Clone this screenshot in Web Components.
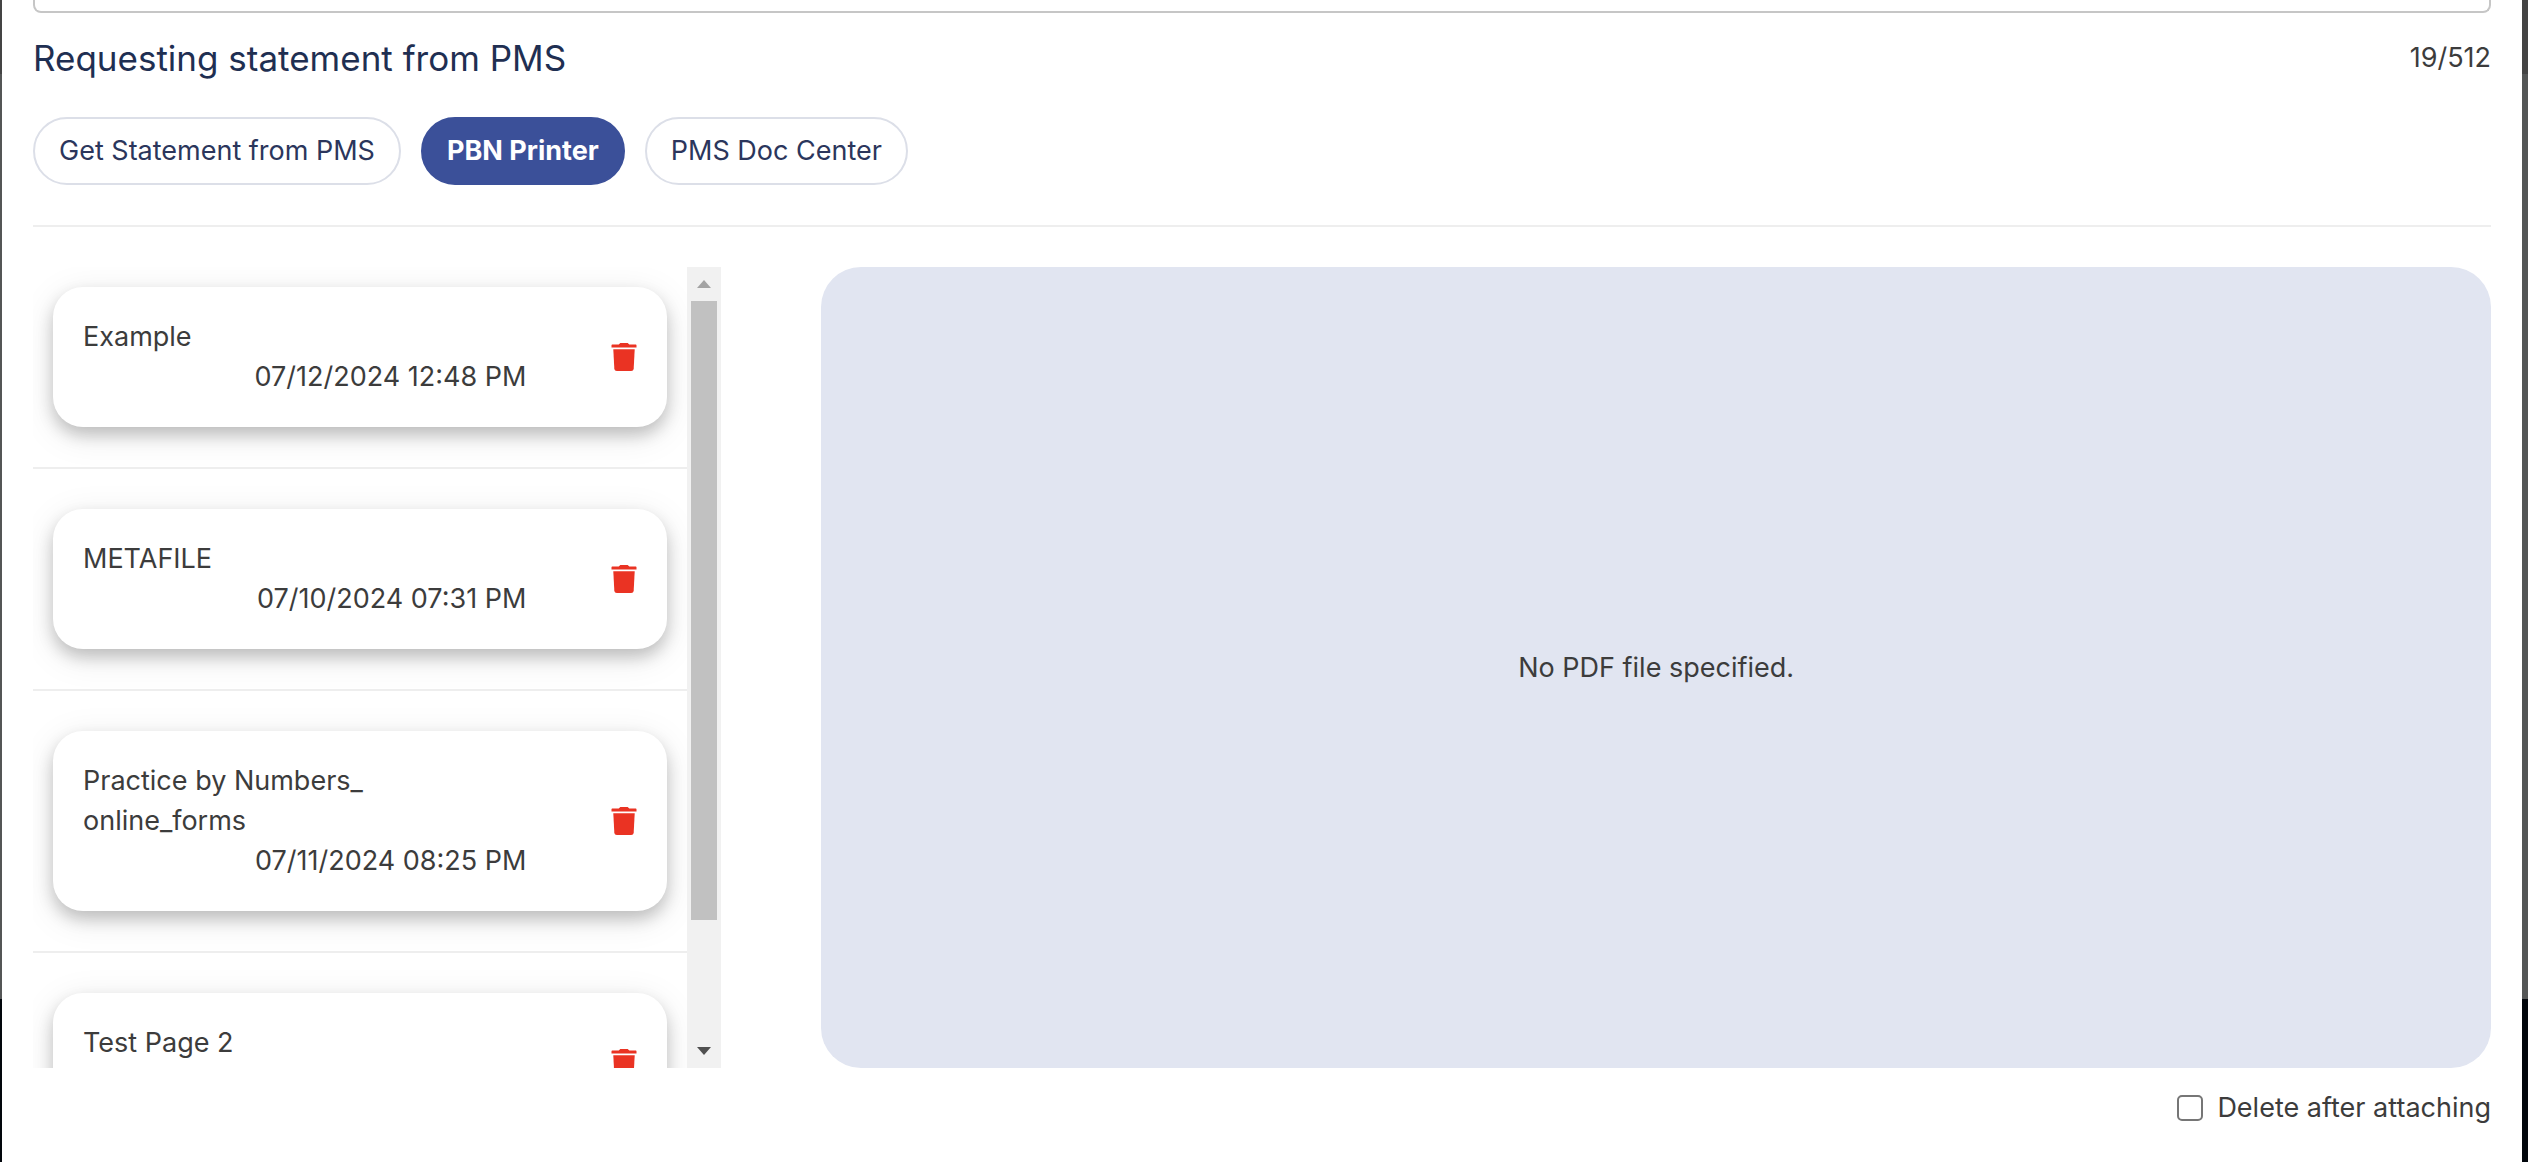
<!DOCTYPE html>
<html lang="en">
<head>
<meta charset="utf-8">
<title>Attach statement</title>
<style>
    html, body {
        margin: 0;
        height: 100%;
    }
    body {
        font-family: Inter, "Open Sans", sans-serif;
        font-size: 27px;
        line-height: 40px;
        color: #3c3c3c;
        background: linear-gradient(#444 74px, #545656 74px 86%, #02060c 86%);
    }
</style>
</head>
<body>
<statement-dialog>
    <char-counter slot="counter" value="19" max="512"></char-counter>

    <tab-chip slot="tabs">Get Statement from PMS</tab-chip>
    <tab-chip slot="tabs" active>PBN Printer</tab-chip>
    <tab-chip slot="tabs">PMS Doc Center</tab-chip>

    <scroll-list slot="files">
        <file-card date="07/12/2024 12:48 PM">Example</file-card>
        <file-card date="07/10/2024 07:31 PM">METAFILE</file-card>
        <file-card date="07/11/2024 08:25 PM">Practice by Numbers_<wbr>online_forms</file-card>
        <file-card date="07/12/2024 12:51 PM">Test Page 2</file-card>
    </scroll-list>

    <pdf-preview slot="preview">No PDF file specified.</pdf-preview>
    <check-option slot="footer">Delete after attaching</check-option>
</statement-dialog>

<script>
class StatementDialog extends HTMLElement {
    constructor() {
        super();
        this.attachShadow({ mode: 'open' }).innerHTML = `
            <style>
                :host {
                    display: flex;
                    flex-direction: column;
                    box-sizing: border-box;
                    height: 100vh;
                    margin: 0 6px 0 2px;
                    padding: 0 31px 34px;
                    background: #fff;
                }
                textarea {
                    display: block;
                    box-sizing: border-box;
                    width: 100%;
                    height: 13px;
                    padding: 0;
                    border: 2px solid #c6c6c6;
                    border-top: 0;
                    border-radius: 0 0 8px 8px;
                    resize: none;
                    overflow: hidden;
                }
                header {
                    display: flex;
                    justify-content: space-between;
                    align-items: center;
                    margin: 25px 0 39px;
                }
                h2 {
                    margin: 0;
                    font-size: 35px;
                    font-weight: 400;
                    line-height: 40px;
                    color: #1f2f52;
                }
                nav {
                    display: flex;
                    gap: 20px;
                }
                hr {
                    width: 100%;
                    margin: 40px 0;
                    border: 0;
                    border-top: 2px solid #eee;
                }
                main {
                    display: flex;
                    flex: 1;
                    gap: 100px;
                    min-height: 0;
                }
                slot[name="files"]::slotted(*) {
                    flex: 0 0 28%;
                }
                slot[name="preview"]::slotted(*) {
                    flex: 1;
                }
                footer {
                    display: flex;
                    justify-content: flex-end;
                    margin-top: 20px;
                }
            </style>
            <textarea aria-label="Message"></textarea>
            <header>
                <h2>Requesting statement from PMS</h2>
                <slot name="counter"></slot>
            </header>
            <nav><slot name="tabs"></slot></nav>
            <hr>
            <main>
                <slot name="files"></slot>
                <slot name="preview"></slot>
            </main>
            <footer><slot name="footer"></slot></footer>
        `;
    }
}

class CharCounter extends HTMLElement {
    constructor() {
        super();
        this.attachShadow({ mode: 'open' }).innerHTML = `
            <style>
                :host { display: block; }
            </style>
            <span>${this.getAttribute('value')}/${this.getAttribute('max')}</span>
        `;
    }
}

class TabChip extends HTMLElement {
    constructor() {
        super();
        this.attachShadow({ mode: 'open' }).innerHTML = `
            <style>
                :host { display: block; }
                button {
                    padding: 12px 24px;
                    border: 2px solid #dcdfe8;
                    border-radius: 34px;
                    background: #fff;
                    color: #2b365c;
                    font: inherit;
                    white-space: nowrap;
                    cursor: pointer;
                }
                :host([active]) button {
                    border-color: #3b5099;
                    background: #3b5099;
                    color: #fff;
                    font-weight: 700;
                }
            </style>
            <button type="button"><slot></slot></button>
        `;
    }
}

class ScrollList extends HTMLElement {
    constructor() {
        super();
        this.attachShadow({ mode: 'open' }).innerHTML = `
            <style>
                :host {
                    display: flex;
                    min-height: 0;
                }
                .items {
                    flex: 1;
                    box-sizing: border-box;
                    padding-top: 20px;
                    overflow-y: auto;
                    scrollbar-width: none;
                }
                .bar {
                    display: flex;
                    flex-direction: column;
                    width: 34px;
                    background: #f1f1f1;
                }
                button {
                    display: flex;
                    justify-content: center;
                    align-items: center;
                    height: 34px;
                    padding: 0;
                    border: 0;
                    background: none;
                    color: #505050;
                }
                button:disabled {
                    color: #a3a3a3;
                }
                .track {
                    flex: 1;
                    padding: 0 4px;
                }
                .thumb {
                    background: #c1c1c1;
                }
            </style>
            <div class="items"><slot></slot></div>
            <div class="bar">
                <button type="button" class="up" aria-label="Scroll up" disabled>
                    <svg width="14" height="8" viewBox="0 0 14 8"><path fill="currentColor" d="M0 8L7 0l7 8z"/></svg>
                </button>
                <div class="track"><div class="thumb"></div></div>
                <button type="button" class="down" aria-label="Scroll down">
                    <svg width="14" height="8" viewBox="0 0 14 8"><path fill="currentColor" d="M0 0h14L7 8z"/></svg>
                </button>
            </div>
        `;
    }

    connectedCallback() {
        const root = this.shadowRoot;
        const items = root.querySelector('.items');
        root.querySelector('.up').addEventListener('click', () => items.scrollBy(0, -80));
        root.querySelector('.down').addEventListener('click', () => items.scrollBy(0, 80));
        items.addEventListener('scroll', () => this.update());
        new ResizeObserver(() => this.update()).observe(items);
    }

    update() {
        const root = this.shadowRoot;
        const items = root.querySelector('.items');
        const track = root.querySelector('.track').clientHeight;
        const thumb = root.querySelector('.thumb');
        const end = items.scrollHeight - items.clientHeight;
        thumb.style.height = Math.round(track * items.clientHeight / items.scrollHeight) + 'px';
        thumb.style.marginTop = Math.round(track * items.scrollTop / items.scrollHeight) + 'px';
        root.querySelector('.up').disabled = items.scrollTop <= 0;
        root.querySelector('.down').disabled = items.scrollTop >= end;
    }
}

class FileCard extends HTMLElement {
    constructor() {
        super();
        this.attachShadow({ mode: 'open' }).innerHTML = `
            <style>
                :host { display: flow-root; }
                .card {
                    display: grid;
                    grid-template-columns: 4fr 1fr;
                    align-items: center;
                    margin: 0 20px;
                    padding: 30px;
                    border-radius: 30px;
                    background: #fff;
                    box-shadow: 0 8px 16px rgba(0,0,0,0.2), 0 8px 36px rgba(0,0,0,0.1);
                }
                .name {
                    max-width: 80%;
                }
                .date {
                    text-align: right;
                }
                button {
                    justify-self: end;
                    display: flex;
                    padding: 0;
                    border: 0;
                    background: none;
                    color: #ea3323;
                    cursor: pointer;
                }
                hr {
                    margin: 40px 0;
                    border: 0;
                    border-top: 2px solid #eee;
                }
            </style>
            <div class="card">
                <div>
                    <div class="name"><slot></slot></div>
                    <div class="date">${this.getAttribute('date')}</div>
                </div>
                <button type="button" aria-label="Delete file">
                    <svg width="26" height="30" viewBox="0 0 26 30" fill="currentColor">
                        <path d="M1.5 2.4h6.200L9.300 1h7.400l1.600 1.400h6.200c.6 0 1 .4 1 1v2.100H.5V3.400c0-.6.4-1 1-1z"/>
                        <path d="M2.300 7.300h21.400l-1 19.200c-.1 1.700-1.200 2.500-2.600 2.500H5.900c-1.400 0-2.500-.8-2.600-2.500z"/>
                    </svg>
                </button>
            </div>
            <hr>
        `;
    }
}

class PdfPreview extends HTMLElement {
    constructor() {
        super();
        this.attachShadow({ mode: 'open' }).innerHTML = `
            <style>
                :host {
                    display: flex;
                    justify-content: center;
                    align-items: center;
                    border-radius: 40px;
                    background: #e1e5f1;
                }
            </style>
            <slot></slot>
        `;
    }
}

class CheckOption extends HTMLElement {
    constructor() {
        super();
        this.attachShadow({ mode: 'open' }).innerHTML = `
            <style>
                :host { display: block; }
                label {
                    display: flex;
                    align-items: center;
                    gap: 14px;
                }
                input {
                    appearance: none;
                    box-sizing: border-box;
                    width: 26px;
                    height: 26px;
                    margin: 0;
                    border: 2px solid #767676;
                    border-radius: 5px;
                    background: #fff;
                }
                input:checked {
                    background: #3b5099;
                }
            </style>
            <label><input type="checkbox"><span><slot></slot></span></label>
        `;
    }
}

customElements.define('char-counter', CharCounter);
customElements.define('tab-chip', TabChip);
customElements.define('file-card', FileCard);
customElements.define('scroll-list', ScrollList);
customElements.define('pdf-preview', PdfPreview);
customElements.define('check-option', CheckOption);
customElements.define('statement-dialog', StatementDialog);
</script>
</body>
</html>
